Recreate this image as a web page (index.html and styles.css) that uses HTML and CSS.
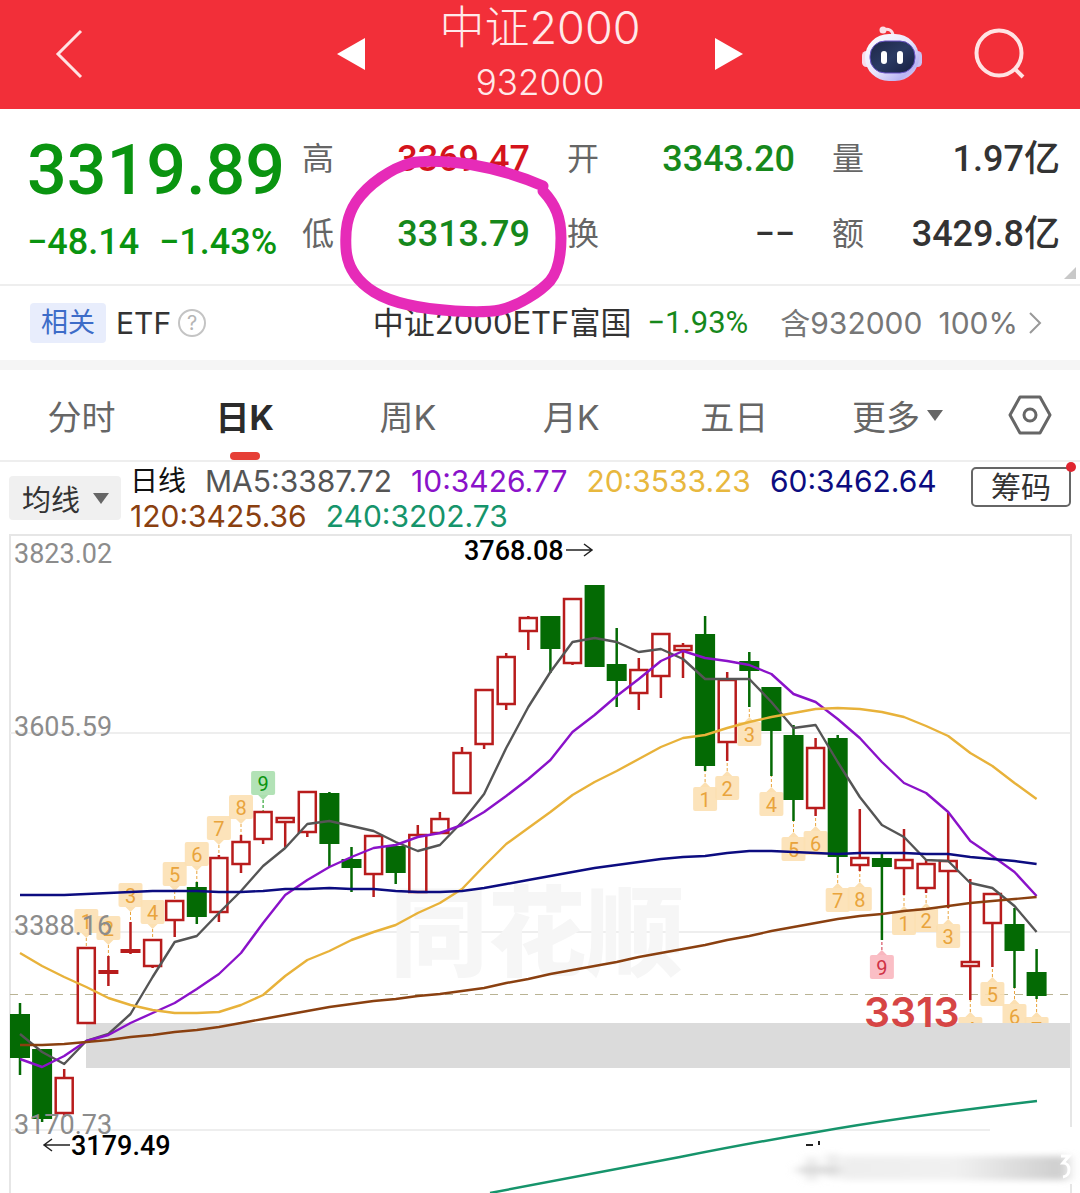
FILE: index.html
```html
<!DOCTYPE html>
<html lang="zh-CN">
<head>
    <meta charset="UTF-8">
    <meta name="viewport" content="width=device-width, initial-scale=1.0">
    <title>中证2000 932000</title>
    <link rel="stylesheet" href="styles.css">
</head>
<body>
    <header class="topbar">
        <button class="icon-btn back" aria-label="返回">
            <svg width="30" height="52" viewBox="0 0 30 52"><path d="M27 3 4 26l23 23" fill="none" stroke="#ffe3e3" stroke-width="3"/></svg>
        </button>
        <div class="switcher">
            <button class="icon-btn" aria-label="上一个">
                <svg width="28" height="32" viewBox="0 0 28 32"><path d="M28 0v32L0 16z" fill="#fff"/></svg>
            </button>
            <div class="title">
                <h1>中证2000</h1>
                <p>932000</p>
            </div>
            <button class="icon-btn" aria-label="下一个">
                <svg width="28" height="32" viewBox="0 0 28 32"><path d="M0 0v32l28-16z" fill="#fff"/></svg>
            </button>
        </div>
        <div class="actions">
            <button class="icon-btn" aria-label="智能助手">
                <svg width="60" height="56" viewBox="0 0 60 56">
                    <defs>
                        <linearGradient id="head" x1="0" y1="0" x2="1" y2="1">
                            <stop offset="0" stop-color="#fff"/>
                            <stop offset=".5" stop-color="#e9e6fb"/>
                            <stop offset=".8" stop-color="#b9b4f3"/>
                            <stop offset="1" stop-color="#f4d6ea"/>
                        </linearGradient>
                        <linearGradient id="face" x1="0" y1="0" x2="1" y2="1">
                            <stop offset="0" stop-color="#1d2746"/>
                            <stop offset=".5" stop-color="#2b3a63"/>
                            <stop offset="1" stop-color="#161e40"/>
                        </linearGradient>
                    </defs>
                    <path d="M21 4c5-2 10 0 10 6" fill="none" stroke="#fbdfe6" stroke-width="3"/>
                    <circle cx="21" cy="4" r="3.5" fill="#fbdfe6"/>
                    <rect x="0" y="25" width="9" height="16" rx="4.5" fill="#f6dcea"/>
                    <rect x="51" y="25" width="9" height="16" rx="4.5" fill="#c9c0f2"/>
                    <rect x="3" y="8" width="54" height="47" rx="24" fill="url(#head)"/>
                    <rect x="8" y="15" width="45" height="32" rx="15" fill="url(#face)" stroke="#6c55c8"/>
                    <rect x="19" y="25" width="6" height="13" rx="3" fill="#fff"/>
                    <rect x="35" y="25" width="6" height="13" rx="3" fill="#fff"/>
                </svg>
            </button>
            <button class="icon-btn" aria-label="搜索">
                <svg width="52" height="52" viewBox="0 0 52 52"><g fill="none" stroke="#ffe3e3" stroke-width="4"><circle cx="25" cy="25" r="22.5"/><path d="m40 40 9 9"/></g></svg>
            </button>
        </div>
    </header>

    <section class="quote">
        <div class="price">
            <strong>3319.89</strong>
            <p><span>−48.14</span><span>−1.43%</span></p>
        </div>
        <dl class="stats">
            <div><dt>高</dt><dd class="red">3369.47</dd></div>
            <div><dt>开</dt><dd class="green">3343.20</dd></div>
            <div><dt>量</dt><dd>1.97亿</dd></div>
            <div><dt>低</dt><dd class="green">3313.79</dd></div>
            <div><dt>换</dt><dd>−−</dd></div>
            <div><dt>额</dt><dd>3429.8亿</dd></div>
        </dl>
        <svg class="corner" width="12" height="12" viewBox="0 0 12 12"><path d="M12 0v12H0z" fill="#c8c8c8"/></svg>
        <svg class="marker" width="240" height="170" viewBox="334 152 240 170">
            <path d="M543 186C520 176 492 168 468 164C445 161 425 160 411 163C392 168 368 184 356 202C347 216 345 230 346 248C347 268 358 282 374 292C395 305 425 309 455 311C472 312 490 312 500 310C518 306 540 292 550 281C559 270 561 255 561 238C561 218 556 205 543 191" fill="none" stroke="#e62bb8" stroke-width="11" stroke-linecap="round"/>
        </svg>
    </section>

    <section class="related">
        <span class="tag">相关</span>
        <span class="kind">ETF</span>
        <button class="icon-btn help" aria-label="说明">?</button>
        <a class="fund" href="#">
            <span class="name">中证2000ETF富国</span>
            <span class="pct">−1.93%</span>
            <span class="muted">含932000</span>
            <span class="muted ratio">100%</span>
            <svg width="14" height="24" viewBox="0 0 14 24"><path d="m2 2 10 10L2 22" fill="none" stroke="#999" stroke-width="2"/></svg>
        </a>
    </section>

    <nav class="tabs">
        <button>分时</button>
        <button class="active">日K</button>
        <button>周K</button>
        <button>月K</button>
        <button>五日</button>
        <button>更多<i class="caret"></i></button>
        <button class="gear" aria-label="设置">
            <svg width="44" height="40" viewBox="0 0 44 40"><g fill="none" stroke="#666" stroke-width="3" stroke-linejoin="round"><path d="M12 2h20l10 18-10 18H12L2 20z"/><circle cx="22" cy="20" r="6"/></g></svg>
        </button>
    </nav>

    <section class="legend">
        <div class="picker">
            <select aria-label="指标"><option>均线</option></select>
            <i class="caret"></i>
        </div>
        <div class="averages">
            <span class="k">日线</span>
            <span class="ma5">MA5:3387.72</span>
            <span class="ma10">10:3426.77</span>
            <span class="ma20">20:3533.23</span>
            <span class="ma60">60:3462.64</span>
            <span class="ma120">120:3425.36</span>
            <span class="ma240">240:3202.73</span>
        </div>
        <button class="chips">筹码</button>
    </section>

    <svg class="chart" id="chart" viewBox="0 534 1080 659" role="img" aria-label="日K线图">
        <defs>
            <filter id="soft" x="-20%" y="-50%" width="140%" height="200%"><feGaussianBlur stdDeviation="6 3"/></filter>
            <linearGradient id="fade">
                <stop offset="0" stop-color="#eee"/>
                <stop offset=".5" stop-color="#f1f1f1"/>
                <stop offset="1" stop-color="#ccc"/>
            </linearGradient>
        </defs>
        <g fill="none" stroke="#e6e6e6" stroke-width="2">
            <path d="M10 1193V535h1061v592M1071 1184v9"/>
            <path d="M10 733h1060M10 932h1060M10 1130h980" stroke="#eee"/>
        </g>
        <text class="watermark" x="390" y="968">同花顺</text>
        <path d="M10 994.5h1060" stroke="#b9b394" stroke-dasharray="8 7"/>
        <g id="flags"></g>
        <rect x="86" y="1023" width="984" height="45" fill="#dbdbdb"/>
        <g id="candles"></g>
        <g id="lines"></g>
        <path d="M490 1193C560 1180 620 1168 680 1157C730 1147 780 1138 817 1132C890 1119 960 1110 1037 1101" fill="none" stroke="#16946b" stroke-width="2.5"/>
        <g class="axis">
            <text x="14" y="563">3823.02</text>
            <text x="14" y="736">3605.59</text>
            <text x="14" y="935">3388.16</text>
            <text x="14" y="1134">3170.73</text>
        </g>
        <g class="extreme">
            <text x="464" y="560">3768.08</text>
            <text x="71" y="1155">3179.49</text>
        </g>
        <path d="M566 550h26m-8-6 8 6-8 6M70 1145H44m8-6-8 6 8 6" fill="none" stroke="#222" stroke-width="1.5"/>
        <text class="level" x="864" y="1027">3313</text>
        <g filter="url(#soft)">
            <path d="M798 1170h44M812 1157v24M832 1154v24" stroke="#d6d6d6" stroke-width="6"/>
            <rect x="840" y="1156" width="228" height="24" fill="url(#fade)"/>
        </g>
        <path d="M806 1145h7M819 1141v4" stroke="#222" stroke-width="2"/>
        <path d="M1061 1156h8l-6 7c8 0 8 13 0 14" fill="none" stroke="#fff" stroke-width="3"/>
    </svg>

    <script src="script.js"></script>
</body>
</html>
```
FILE: styles.css
```css
* {
    box-sizing: border-box;
}
body {
    margin: 0;
    background: #fff;
    color: #333;
    font-family: Inter, "Noto Sans CJK SC", sans-serif;
    overflow-x: hidden;
}
h1, p, dl, dd {
    margin: 0;
}
button {
    padding: 0;
    border: 0;
    background: none;
    color: inherit;
    font: inherit;
    cursor: pointer;
}
svg {
    display: block;
}

/* top bar */
.topbar {
    display: grid;
    grid-template-columns: 1fr auto 1fr;
    align-items: center;
    height: 109px;
    padding: 0 54px 6px;
    background: #f22f39;
    color: #ffe9e9;
}
.back {
    justify-self: start;
}
.switcher {
    display: flex;
    align-items: center;
    justify-content: space-between;
    width: 406px;
}
.title {
    text-align: center;
}
.title h1 {
    font-size: 45px;
    font-weight: 300;
    line-height: 56px;
}
.title p {
    font-size: 35px;
    font-weight: 300;
    line-height: 52px;
}
.actions {
    display: flex;
    align-items: center;
    justify-self: end;
    gap: 52px;
}

/* quote */
.quote {
    position: relative;
    display: flex;
    padding: 13px 20px 12px 27px;
    border-bottom: 2px solid #eee;
    font-family: Roboto, "Noto Sans CJK SC", sans-serif;
    font-weight: 500;
}
.price {
    flex: 0 0 275px;
    color: #0a9410;
}
.price strong {
    display: block;
    font-size: 70px;
    font-weight: 500;
    line-height: 96px;
}
.price p {
    display: flex;
    gap: 20px;
    font-size: 36px;
    line-height: 48px;
}
.stats {
    flex: 1;
    display: grid;
    grid-template-columns: repeat(3, 1fr);
    column-gap: 37px;
}
.stats div {
    display: flex;
    justify-content: space-between;
    font-size: 36px;
    line-height: 75px;
}
.stats dt {
    color: #666;
    font-size: 32px;
    font-weight: 400;
}
.red {
    color: #d4141c;
}
.green {
    color: #16881b;
}
.corner {
    position: absolute;
    right: 4px;
    bottom: 5px;
}
.marker {
    position: absolute;
    top: 43px;
    left: 334px;
    z-index: 1;
}

/* related fund */
.related {
    display: flex;
    align-items: center;
    height: 84px;
    padding: 0 38px 0 30px;
    border-bottom: 10px solid #f5f5f5;
    font-size: 30px;
    line-height: 40px;
    white-space: nowrap;
}
.tag {
    padding: 0 11px;
    border-radius: 4px;
    background: #e8edfc;
    color: #3d6cc8;
    font-size: 27px;
}
.kind {
    margin: 0 7px 0 10px;
}
.help {
    width: 28px;
    height: 28px;
    border: 2px solid #c4c4c4;
    border-radius: 50%;
    color: #b5b5b5;
    font-size: 20px;
    line-height: 24px;
}
.fund {
    display: flex;
    align-items: center;
    margin-left: auto;
    color: inherit;
    text-decoration: none;
}
.name,
.pct {
    font-size: 31px;
}
.pct {
    margin: 0 32px 0 16px;
    color: #16881b;
    font-family: Roboto, sans-serif;
}
.muted {
    color: #777;
}
.ratio {
    margin: 0 10px 0 16px;
}

/* period tabs */
.tabs {
    display: flex;
    height: 92px;
    border-bottom: 2px solid #eee;
    color: #666;
    font-size: 34px;
}
.tabs button {
    position: relative;
    flex: 1;
    display: flex;
    align-items: center;
    justify-content: center;
}
.tabs .gear {
    flex: 0 0 101px;
}
.tabs .active {
    color: #2b2b2b;
    font-weight: 700;
}
.tabs .active::after {
    content: "";
    position: absolute;
    bottom: 0;
    width: 30px;
    height: 8px;
    border-radius: 4px;
    background: #e63f36;
}
.caret {
    border: 8px solid transparent;
    border-top: 11px solid #666;
    border-bottom: 0;
}
.tabs .caret {
    margin-left: 7px;
}

/* indicator legend */
.legend {
    display: flex;
    align-items: flex-start;
    height: 72px;
    padding: 2px 9px 0;
}
.picker {
    position: relative;
    margin-top: 12px;
}
.picker select {
    appearance: none;
    width: 112px;
    height: 44px;
    padding: 0 13px;
    border: 0;
    border-radius: 4px;
    background: #f0f0f0;
    color: #333;
    font: 29px "Noto Sans CJK SC", sans-serif;
}
.picker .caret {
    position: absolute;
    top: 17px;
    right: 12px;
    pointer-events: none;
}
.averages {
    flex: 1;
    display: flex;
    flex-wrap: wrap;
    column-gap: 19px;
    padding-left: 9px;
    font-size: 30px;
    line-height: 35px;
}
.k {
    color: #111;
    font-size: 28px;
}
.ma5 { color: #555; }
.ma10 { color: #8a12c9; }
.ma20 { color: #e8b83e; }
.ma60 { color: #0c0c80; }
.ma120 { color: #8a4010; }
.ma240 { color: #16946b; }
.chips {
    position: relative;
    width: 100px;
    height: 40px;
    margin-top: 3px;
    border: 2px solid #666;
    border-radius: 5px;
    font-size: 30px;
    line-height: 34px;
}
.chips::after {
    content: "";
    position: absolute;
    top: -7px;
    right: -7px;
    width: 10px;
    height: 10px;
    border-radius: 50%;
    background: #e02530;
}

/* chart */
.chart {
    width: 100%;
    font-family: Roboto, sans-serif;
}
.watermark {
    fill: #f6f6f6;
    font: 900 98px "Noto Sans CJK SC", sans-serif;
}
.axis {
    fill: #8c8c8c;
    font-size: 27px;
}
.extreme {
    fill: #000;
    font-size: 27px;
    font-weight: 500;
}
.level {
    fill: #d64545;
    font: 600 41px Inter, sans-serif;
}
.flag {
    font-size: 20px;
    text-anchor: middle;
}
```
FILE: script.js
```js
const STEP = 22.1;
const FIRST = 20;
const x = i => FIRST + i * STEP;

// [kind, high, bodyTop, bodyBottom, low], kind: g falling, r rising, d doji
const candles = [
    ['g', 1003, 1014, 1058, 1075], ['g', 1049, 1049, 1119, 1122], ['r', 1069, 1077, 1114, 1117],
    ['r', 947, 947, 1024, 1024], ['d', 956, 970, 974, 986], ['d', 922, 949, 953, 954],
    ['r', 939, 939, 967, 968], ['r', 900, 900, 921, 937], ['g', 882, 887, 917, 924],
    ['r', 855, 857, 913, 922], ['r', 835, 841, 865, 873], ['r', 811, 811, 840, 844],
    ['r', 817, 817, 823, 847], ['r', 791, 791, 833, 837], ['g', 792, 793, 844, 867],
    ['g', 847, 859, 868, 892], ['r', 835, 835, 875, 897], ['g', 846, 846, 873, 884],
    ['r', 825, 834, 893, 893], ['r', 812, 818, 834, 834], ['r', 747, 752, 794, 794],
    ['r', 689, 689, 745, 749], ['r', 653, 656, 705, 710], ['r', 616, 617, 632, 650],
    ['g', 616, 616, 649, 673], ['r', 598, 598, 664, 665], ['g', 585, 585, 667, 667],
    ['g', 628, 664, 681, 707], ['r', 658, 669, 694, 710], ['r', 633, 633, 677, 698],
    ['r', 643, 645, 651, 678], ['g', 616, 634, 766, 771], ['r', 672, 679, 743, 761],
    ['g', 652, 661, 671, 707], ['g', 687, 687, 731, 776], ['g', 725, 735, 800, 821],
    ['r', 738, 747, 809, 816], ['g', 735, 738, 857, 873], ['r', 809, 857, 866, 871],
    ['g', 852, 858, 867, 940], ['r', 829, 859, 869, 895], ['r', 860, 863, 889, 893],
    ['r', 813, 860, 872, 908], ['r', 879, 961, 967, 1000], ['r', 893, 893, 924, 967],
    ['g', 908, 924, 951, 988], ['g', 949, 972, 996, 999]
];

// [candle, label, box top]
const above = [
    [3, 1, 909], [4, 2, 916], [5, 3, 883], [6, 4, 900], [7, 5, 862],
    [8, 6, 842], [9, 7, 816], [10, 8, 795], [11, 9, 771]
];
const below = [
    [31, 1, 787], [32, 2, 776], [33, 3, 722], [34, 4, 792], [35, 5, 837], [36, 6, 831],
    [37, 7, 888], [38, 8, 887], [39, 9, 955], [40, 1, 911], [41, 2, 908], [42, 3, 924],
    [43, 4, 1017], [44, 5, 982], [45, 6, 1004], [46, 7, 1017]
];

const averages = {
    '#555': [1034, 1052, 1064, 1041, 1034, 1014, 977, 942, 936, 913, 891, 866, 848, 824, 821, 826,
        831, 842, 851, 845, 822, 794, 748, 707, 672, 642, 638, 642, 652, 649, 659, 679,
        679, 679, 702, 728, 725, 762, 797, 825, 837, 860, 861, 883, 888, 906, 932],
    '#8a12c9': [1059, 1067, 1056, 1041, 1035, 1023, 1013, 1003, 989, 974, 953, 923, 895, 880, 867, 857,
        848, 845, 837, 833, 825, 812, 796, 779, 760, 732, 715, 696, 679, 661, 651, 658,
        661, 665, 674, 694, 702, 719, 738, 762, 783, 793, 812, 841, 856, 872, 896],
    '#e8b23a': [953, 966, 977, 987, 998, 1005, 1010, 1013, 1013, 1012, 1005, 995, 976, 960, 951, 940,
        932, 925, 913, 903, 889, 866, 844, 828, 812, 795, 782, 771, 759, 747, 738, 735,
        728, 722, 717, 713, 709, 708, 709, 712, 717, 726, 736, 753, 766, 783, 799],
    '#0c0c80': [895, 895, 895, 894, 893, 892, 891, 891, 891, 892, 892, 891, 889, 889, 888, 889,
        889, 891, 892, 892, 891, 888, 884, 880, 876, 872, 868, 865, 862, 859, 857, 856,
        853, 851, 851, 852, 853, 854, 853, 853, 853, 854, 854, 857, 859, 861, 864],
    '#8a4010': [1045, 1045, 1044, 1042, 1040, 1037, 1035, 1032, 1030, 1027, 1023, 1019, 1015, 1011, 1007, 1004,
        1001, 999, 996, 994, 991, 988, 983, 979, 974, 970, 966, 962, 957, 953, 949, 945,
        940, 936, 931, 927, 923, 919, 916, 914, 911, 909, 906, 903, 901, 899, 897]
};

function drawCandle([kind, high, top, bottom, low], i) {
    const cx = x(i);
    const color = kind === 'g' ? '#046a04' : '#b81c1c';
    const wicks = `<path d="M${cx} ${high}V${top}M${cx} ${bottom}V${low}" stroke="${color}" stroke-width="2.5"/>`;
    if (kind === 'r') {
        return wicks + `<rect x="${cx - 8.5}" y="${top + 1}" width="17" height="${bottom - top - 2}" fill="none" stroke="${color}" stroke-width="2.5"/>`;
    }
    return wicks + `<rect x="${cx - 10}" y="${top}" width="20" height="${bottom - top}" fill="${color}"/>`;
}

function drawFlag(i, label, top, isAbove) {
    const cx = x(i);
    let fill = '#fce0b2';
    let color = '#e9a43c';
    if (label === 9) {
        fill = isAbove ? '#aadfae' : '#f9b7bf';
        color = isAbove ? '#0a9410' : '#cf3245';
    }
    const edge = isAbove ? top + 24 : top;
    const tip = isAbove ? edge + 5 : edge - 5;
    const end = isAbove ? candles[i][1] : candles[i][4];
    return `<g class="flag">
        <path d="M${cx} ${tip}V${end}" stroke="${color}" stroke-dasharray="3 2"/>
        <rect x="${cx - 12}" y="${top}" width="24" height="24" rx="2" fill="${fill}" fill-opacity=".9"/>
        <path d="M${cx - 5} ${edge}L${cx} ${tip}L${cx + 5} ${edge}z" fill="${fill}"/>
        <text x="${cx}" y="${top + 20}" fill="${color}">${label}</text>
    </g>`;
}

document.getElementById('candles').innerHTML = candles.map(drawCandle).join('');
document.getElementById('flags').innerHTML =
    above.map(f => drawFlag(...f, true)).join('') + below.map(f => drawFlag(...f, false)).join('');
document.getElementById('lines').innerHTML = Object.entries(averages).map(([color, ys]) =>
    `<polyline points="${ys.map((y, i) => x(i) + ',' + y).join(' ')}" fill="none" stroke="${color}" stroke-width="2.4" stroke-linejoin="round"/>`
).join('');
```
